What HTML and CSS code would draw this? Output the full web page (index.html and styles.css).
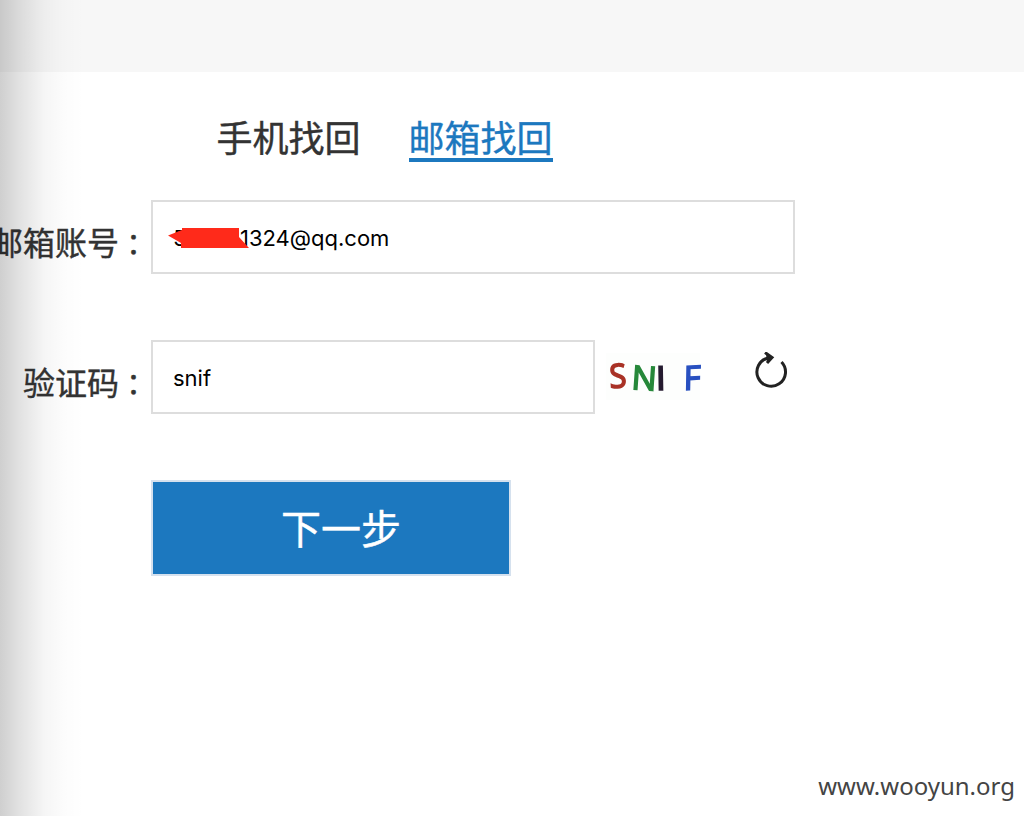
FILE: index.html
```
<!DOCTYPE html>
<html lang="zh-CN">
<head>
<meta charset="utf-8">
<title>邮箱找回</title>
<link rel="stylesheet" href="styles.css">
</head>
<body>
<header class="topbar"></header>
<main class="content">
  <nav class="tabs">
    <a class="tab">手机找回</a>
    <a class="tab tab-active">邮箱找回</a>
  </nav>
  <form class="form">
    <div class="row">
      <label class="label">邮箱账号<span class="colon">：</span></label>
      <div class="field field-wide">
        <span class="masked">5</span><span class="account">1324@qq.com</span>
        <svg class="redaction" width="84" height="24" viewBox="0 0 84 24"><path d="M0 8.5 14 3V1H71V10L81 21H13V16Z" fill="#ff2a1a"/></svg>
      </div>
    </div>
    <div class="row">
      <label class="label">验证码<span class="colon">：</span></label>
      <div class="field field-code"><span class="code">snif</span></div>
      <svg class="captcha" width="100" height="50" viewBox="0 0 100 50">
        <rect x="1" y="1" width="94" height="47" fill="#fdfefd"/>
        <text transform="translate(5 36) rotate(-3)" fill="#a93226" stroke="#a93226" textLength="17" lengthAdjust="spacingAndGlyphs">S</text>
        <text transform="translate(26 37) rotate(4)" fill="#26883a" stroke="#26883a" textLength="25" lengthAdjust="spacingAndGlyphs">N</text>
        <text transform="translate(51 38) rotate(-1)" fill="#251b30" stroke="#251b30" textLength="10" lengthAdjust="spacingAndGlyphs">I</text>
        <text transform="translate(78.5 38) rotate(-3) skewX(-4)" fill="#2850c0" stroke="#2850c0" textLength="17" lengthAdjust="spacingAndGlyphs">F</text>
      </svg>
      <svg class="refresh" width="34" height="38" viewBox="0 0 34 38">
        <path d="M27.5 10A14.3 14.3 0 1 1 14 6" fill="none" stroke="#222" stroke-width="3"/>
        <path d="M11 0.5 18 5.5 13 11" fill="none" stroke="#222" stroke-width="3"/>
        <path d="M12 2 19 5.5 13 10Z" fill="#222"/>
      </svg>
    </div>
    <button class="submit" type="button">下一步</button>
  </form>
</main>
<footer class="watermark">www.wooyun.org</footer>
<div class="edge-shadow"></div>
</body>
</html>
```
FILE: styles.css
```
* { box-sizing: border-box; }
body {
  margin: 0;
  width: 1024px;
  height: 816px;
  overflow: hidden;
  position: relative;
  display: flex;
  flex-direction: column;
  background: #fff;
  color: #333;
  font-family: "Noto Sans CJK SC", sans-serif;
}
.topbar { height: 72px; flex: none; background: #f7f7f7; }
.content { flex: 1; }
.tabs {
  display: flex;
  gap: 48px;
  height: 128px;
  padding: 42px 0 0 217px;
}
.tab {
  width: 144px;
  height: 48px;
  font-size: 36px;
  line-height: 44px;
  text-indent: -0.5px;
  white-space: nowrap;
  -webkit-text-stroke: 0.4px;
}
.tab-active { color: #1c78bf; border-bottom: 4px solid #1c78bf; }
.row { display: flex; height: 74px; margin-bottom: 66px; }
.label {
  width: 151px;
  flex: none;
  display: flex;
  justify-content: flex-end;
  font-size: 32px;
  line-height: 82px;
  white-space: nowrap;
  -webkit-text-stroke: 0.4px;
}
.colon { flex: none; width: 32px; font: 29px/86px "Noto Sans CJK TC", sans-serif; }
.field {
  position: relative;
  display: flex;
  align-items: center;
  height: 74px;
  padding: 2px 20px 0;
  border: 2px solid #ddd;
  color: #000;
  font: 22px/30px Inter, sans-serif;
}
.field-wide { width: 644px; }
.field-code { width: 444px; }
.masked { width: 67px; }
.redaction { position: absolute; left: 15px; top: 25px; }
.captcha {
  margin: 12px 0 0 10px;
  font: 33px "Open Sans", sans-serif;
  filter: blur(0.6px);
}
.captcha text { stroke-width: 1.6px; }
.refresh { margin: 12px 0 0 49px; filter: blur(0.3px); }
.submit {
  display: block;
  width: 360px;
  height: 96px;
  margin-left: 151px;
  padding: 0 0 2px 20px;
  border: 2px solid #d5e1ee;
  background: #1c78bf;
  color: #fff;
  font: 40px/60px "Noto Sans CJK SC", sans-serif;
  -webkit-text-stroke: 0.4px;
}
.watermark {
  padding: 0 9px 12px 0;
  text-align: right;
  color: #444;
  font: 24px/36px "Noto Sans", sans-serif;
}
.edge-shadow {
  position: absolute;
  left: 0;
  top: 0;
  width: 84px;
  height: 816px;
  background: linear-gradient(to right, rgba(0,0,0,.19), rgba(0,0,0,.115) 20px, rgba(0,0,0,.04) 44px, rgba(0,0,0,.01) 64px, transparent);
}
```
